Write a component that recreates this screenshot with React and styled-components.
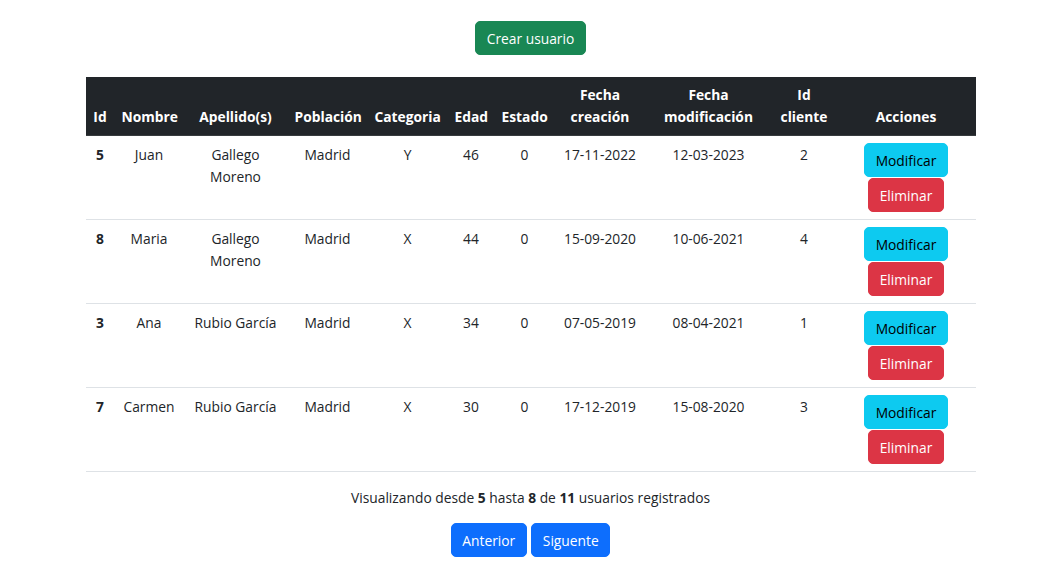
import React from "react";
import styled, { createGlobalStyle } from "styled-components";

const GlobalStyle = createGlobalStyle`
  html, body { background: #fff; }
  body {
    margin: 0 0 0 8px;
    font-family: "Open Sans", "Liberation Sans", sans-serif;
    font-size: 13.8px;
    line-height: 22px;
    color: #212529;
  }
  * { box-sizing: border-box; }
`;

const Page = styled.main`
  display: flex;
  flex-direction: column;
  align-items: center;
  padding-top: 21px;
`;

const Button = styled.button`
  display: inline-flex;
  align-items: center;
  justify-content: center;
  height: 34px;
  padding: 1px 10.8px 0;
  border: 1px solid ${(p) => p.$bg};
  border-radius: 5px;
  background: ${(p) => p.$bg};
  color: ${(p) => p.$fg || "#fff"};
  font-family: inherit;
  font-size: 13.8px;
  line-height: 22px;
  white-space: nowrap;
  cursor: pointer;
`;

const TopBar = styled.div`
  display: flex;
  justify-content: center;
  margin-bottom: 22px;
`;

const Table = styled.table`
  width: 890px;
  table-layout: fixed;
  border-collapse: collapse;
  margin-bottom: 14px;
`;

const Col = styled.col`
  width: ${(p) => p.$w}px;
`;

const HeadCell = styled.th`
  background: #212529;
  color: #fff;
  font-weight: 700;
  text-align: center;
  vertical-align: bottom;
  padding: 7px 7px;
  border-bottom: 1px solid #373b3e;
  line-height: 22px;
`;

const Cell = styled.td`
  text-align: center;
  vertical-align: top;
  padding: 7px 7px;
  font-weight: ${(p) => (p.$bold ? 700 : 400)};
  white-space: ${(p) => (p.$nowrap ? "nowrap" : "normal")};
`;

const CellText = styled.div`
  padding-top: 1px;
  margin-bottom: -1px;
`;

const Row = styled.tr`
  border-bottom: 1px solid #dee2e6;
`;

const Actions = styled.div`
  display: flex;
  flex-direction: column;
  align-items: center;
  gap: 1px;
`;

const Summary = styled.p`
  margin: 0 0 14px;
  padding-top: 1px;
  text-align: center;
`;

const Pager = styled.div`
  display: flex;
  justify-content: center;
  gap: 4px;
`;

const columns = [
  { label: "Id", w: 29 },
  { label: "Nombre", w: 69 },
  { label: "Apellido(s)", w: 104 },
  { label: "Población", w: 80 },
  { label: "Categoria", w: 80 },
  { label: "Edad", w: 47 },
  { label: "Estado", w: 60 },
  { label: "Fecha creación", w: 91 },
  { label: "Fecha modificación", w: 126 },
  { label: "Id cliente", w: 65 },
  { label: "Acciones", w: 139 },
];

const users = [
  { id: 5, nombre: "Juan", apellidos: "Gallego Moreno", poblacion: "Madrid", categoria: "Y", edad: 46, estado: 0, creacion: "17-11-2022", modificacion: "12-03-2023", cliente: 2 },
  { id: 8, nombre: "Maria", apellidos: "Gallego Moreno", poblacion: "Madrid", categoria: "X", edad: 44, estado: 0, creacion: "15-09-2020", modificacion: "10-06-2021", cliente: 4 },
  { id: 3, nombre: "Ana", apellidos: "Rubio García", poblacion: "Madrid", categoria: "X", edad: 34, estado: 0, creacion: "07-05-2019", modificacion: "08-04-2021", cliente: 1 },
  { id: 7, nombre: "Carmen", apellidos: "Rubio García", poblacion: "Madrid", categoria: "X", edad: 30, estado: 0, creacion: "17-12-2019", modificacion: "15-08-2020", cliente: 3 },
];

export default function App() {
  const fields = ["nombre", "apellidos", "poblacion", "categoria", "edad", "estado", "creacion", "modificacion", "cliente"];
  return (
    <>
      <GlobalStyle />
      <Page>
        <TopBar>
          <Button $bg="#198754">Crear usuario</Button>
        </TopBar>
        <Table>
          <colgroup>
            {columns.map((c) => (
              <Col key={c.label} $w={c.w} />
            ))}
          </colgroup>
          <thead>
            <tr>
              {columns.map((c) => (
                <HeadCell key={c.label}>{c.label}</HeadCell>
              ))}
            </tr>
          </thead>
          <tbody>
            {users.map((u) => (
              <Row key={u.id}>
                <Cell $bold>
                  <CellText>{u.id}</CellText>
                </Cell>
                {fields.map((f) => (
                  <Cell key={f} $nowrap={f === "creacion" || f === "modificacion"}>
                    <CellText>{u[f]}</CellText>
                  </Cell>
                ))}
                <Cell>
                  <Actions>
                    <Button $bg="#0dcaf0" $fg="#000">Modificar</Button>
                    <Button $bg="#dc3545">Eliminar</Button>
                  </Actions>
                </Cell>
              </Row>
            ))}
          </tbody>
        </Table>
        <Summary>
          Visualizando desde <b>5</b> hasta <b>8</b> de <b>11</b> usuarios registrados
        </Summary>
        <Pager>
          <Button $bg="#0d6efd">Anterior</Button>
          <Button $bg="#0d6efd">Siguente</Button>
        </Pager>
      </Page>
    </>
  );
}
